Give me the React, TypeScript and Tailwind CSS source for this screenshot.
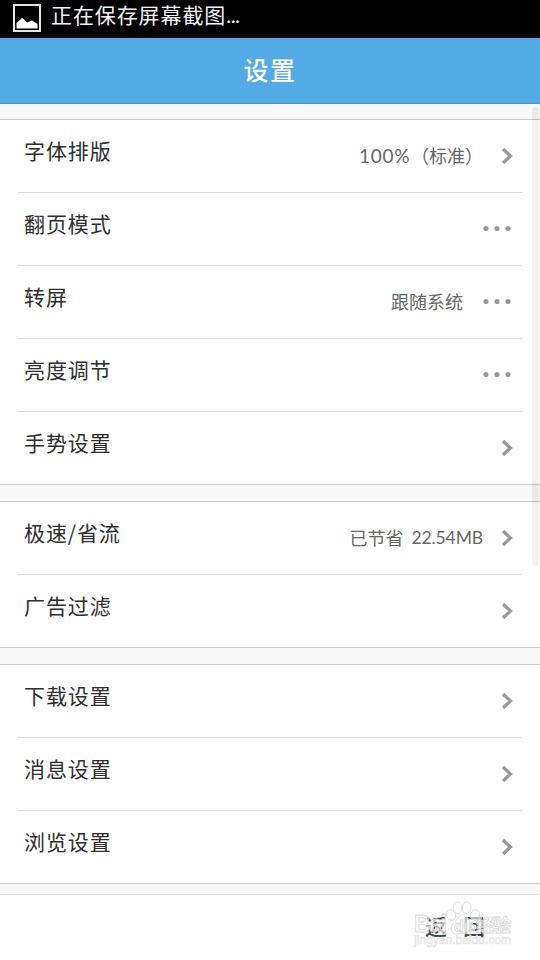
import React from 'react';

type RowKind = 'link' | 'menu';

interface SettingItem {
  label: string;
  value?: string;
  // latin part of the value, set in a rounder face
  amount?: string;
  amountFirst?: boolean;
  kind: RowKind;
}

const groups: SettingItem[][] = [
  [
    { label: '字体排版', value: '（标准）', amount: '100%', amountFirst: true, kind: 'link' },
    { label: '翻页模式', kind: 'menu' },
    { label: '转屏', value: '跟随系统', kind: 'menu' },
    { label: '亮度调节', kind: 'menu' },
    { label: '手势设置', kind: 'link' },
  ],
  [
    { label: '极速/省流', value: '已节省', amount: '22.54MB', kind: 'link' },
    { label: '广告过滤', kind: 'link' },
  ],
  [
    { label: '下载设置', kind: 'link' },
    { label: '消息设置', kind: 'link' },
    { label: '浏览设置', kind: 'link' },
  ],
];

const ChevronIcon = () => (
  <svg className="w-[12px] h-[18px] ml-[18px]" viewBox="0 0 12 18" fill="none">
    <path d="M2 2L9.5 9L2 16" stroke="#999" strokeWidth="3.2" />
  </svg>
);

const DotsIcon = () => (
  <svg className="w-[28px] h-[6px] ml-[20px] mr-[2px] mb-[2px]" viewBox="0 0 28 6" fill="#999">
    <circle cx="3" cy="3.500" r="2.6" />
    <circle cx="14" cy="3.500" r="2.6" />
    <circle cx="25" cy="3.500" r="2.6" />
  </svg>
);

const SettingRow: React.FC<{ item: SettingItem; last: boolean }> = ({ item, last }) => (
  <div className={last ? 'mx-[18px]' : 'mx-[18px] border-b border-[#dcdcdc]'}>
    <div className="h-[72px] pl-[6px] pr-[9px] flex items-center">
      <span className="flex-1 pb-[12px] text-[21px] leading-[24px] tracking-[0.9px] text-[#2e2e2e]">{item.label}</span>
      <span className="flex items-center text-[18px] leading-[24px] text-[#666]">
        {item.amount && item.amountFirst && (
          <span className="font-['Lato',sans-serif] w-[52px] pb-[1px] text-[19px] tracking-[0.7px]">{item.amount}</span>
        )}
        {item.value && <span className="pb-[3px]">{item.value}</span>}
        {item.amount && !item.amountFirst && (
          <span className="font-['Lato',sans-serif] ml-[8px] pb-[1px] text-[17.5px] tracking-[-0.1px]">{item.amount}</span>
        )}
      </span>
      {item.kind === 'link' ? <ChevronIcon /> : <DotsIcon />}
    </div>
  </div>
);

const StatusBar = () => (
  <div className="h-[38px] bg-black flex items-start">
    <svg className="w-[30px] h-[30px] ml-[12px] mt-[3px]" viewBox="0 0 30 30">
      <rect x="2" y="2" width="26" height="26" fill="none" stroke="#e6e6e6" strokeWidth="2" />
      <path d="M4.500 25.500V20L8 17L10 14.500L15 19.500L20 17.500L25.500 21V25.500Z" fill="#fff" />
    </svg>
    <span className="ml-[9px] text-[21px] leading-[28px] tracking-[0.9px] text-[#f2f2f2]">
      正在保存屏幕截图<span className="font-['Lato',sans-serif] tracking-[-0.5px]">...</span>
    </span>
  </div>
);

const Watermark = () => (
  <svg className="absolute left-[412px] top-[898px] w-[104px] h-[52px]" viewBox="0 0 104 52">
    <g fill="#fff" fillOpacity="0.6" stroke="#d8d8d8" strokeWidth="0.8">
      <ellipse cx="39" cy="17" rx="4.400" ry="5.500" transform="rotate(-25 39 17)" />
      <ellipse cx="45.5" cy="9.800" rx="4.400" ry="5.8" />
      <ellipse cx="54.500" cy="9.800" rx="4.400" ry="5.8" transform="rotate(8 54.500 9.800)" />
      <ellipse cx="63" cy="17" rx="4.400" ry="5.500" transform="rotate(20 63 17)" />
      <path d="M51 17C46.500 17 46 22 42 25C37.500 29 39 36 45 36C49 35 53 35 57 36C63 36 64.500 29 60 25C56 22 55.500 17 51 17Z" />
      <text x="2" y="34" fontSize="23" textLength="33" fontWeight="700" fontFamily="Liberation Sans, sans-serif">Bai</text>
      <text x="42" y="34" fontSize="16" textLength="19" fontWeight="700" fontFamily="Liberation Sans, sans-serif">du</text>
      <text x="64" y="34" fontSize="18" textLength="35" fontWeight="700" fontFamily="Noto Sans CJK SC, sans-serif">经验</text>
    </g>
    <text x="2" y="46" fontSize="12" textLength="97" fill="#fff" stroke="#dedede" strokeWidth="0.6" fontFamily="Liberation Sans, sans-serif">
      jingyan.baidu.com
    </text>
  </svg>
);

export default function App() {
  return (
    <div className="relative w-[540px] h-[960px] overflow-hidden flex flex-col bg-[#f8f8f8] font-['Noto_Sans_CJK_SC',sans-serif]">
      <StatusBar />
      <header className="h-[66px] pb-[3px] bg-[#53abe6] border-b border-[#3f97d4] flex items-center justify-center">
        <h1 className="text-[25px] leading-[30px] tracking-[1.5px] font-medium text-white">设置</h1>
      </header>

      <main className="flex-1 pt-[15px] flex flex-col gap-[16px]">
        {groups.map((group, i) => (
          <section key={i} className="bg-white border-y border-[#c8c8c8]">
            {group.map((item, j) => (
              <SettingRow key={item.label} item={item} last={j === group.length - 1} />
            ))}
          </section>
        ))}
      </main>

      <footer className="h-[66px] pb-[5px] pr-[55px] bg-white border-t border-[#dcdcdc] flex items-center justify-end">
        <span className="text-[22px] leading-[28px] tracking-[16px] -mr-[16px] font-medium text-[#40464c]">返回</span>
      </footer>

      {/* scroll thumb */}
      <div className="absolute right-[1px] top-[107px] w-[7px] h-[459px] rounded-[3px] bg-black/[0.06]" />
      <Watermark />
    </div>
  );
}
